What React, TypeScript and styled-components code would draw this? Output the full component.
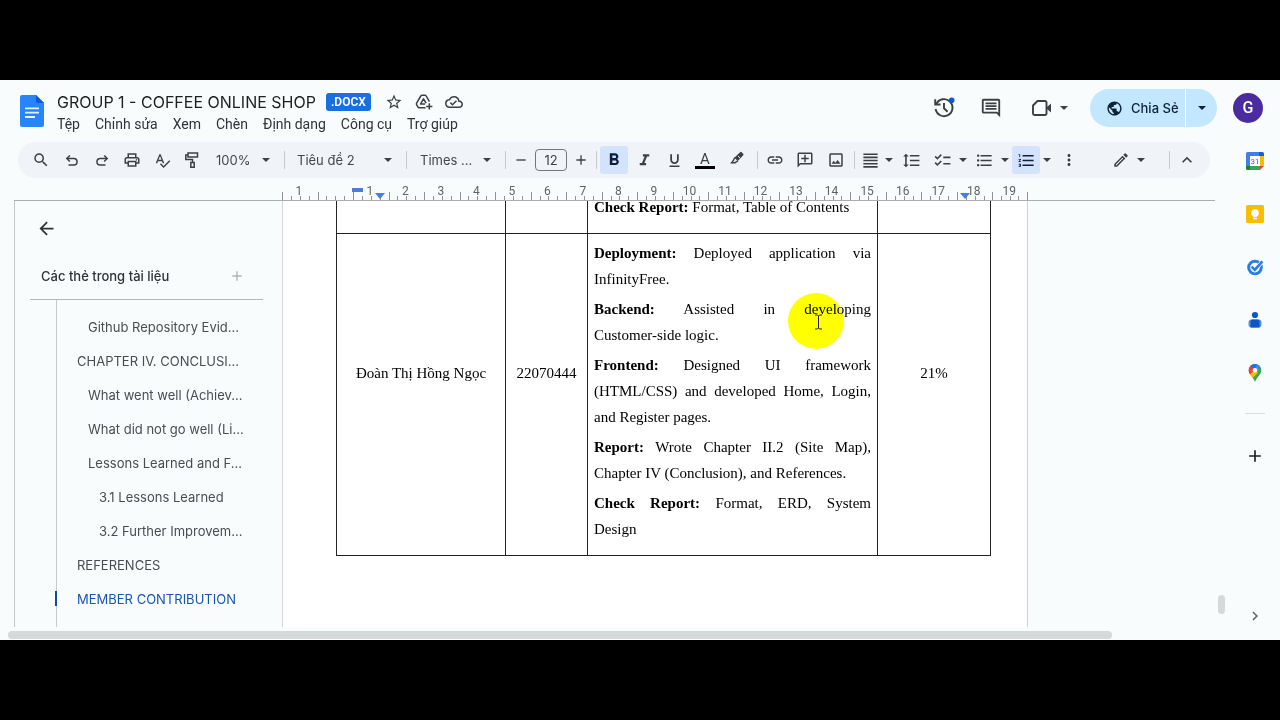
import React from "react";
import styled, { createGlobalStyle, css } from "styled-components";
import {
  MdSearch,
  MdOutlinePrint,
  MdSpellcheck,
  MdFormatBold,
  MdFormatItalic,
  MdFormatUnderlined,
  MdInsertLink,
  MdOutlineAddComment,
  MdOutlineImage,
  MdFormatAlignJustify,
  MdFormatLineSpacing,
  MdChecklist,
  MdFormatListBulleted,
  MdFormatListNumbered,
  MdMoreVert,
  MdOutlineModeEdit,
  MdKeyboardArrowUp,
  MdKeyboardArrowRight,
  MdStarOutline,
  MdOutlineCloudDone,
  MdOutlineComment,
  MdPublic,
  MdArrowBack,
  MdAdd,
  MdRemove,
} from "react-icons/md";

const ui = `"Inter", "Roboto", sans-serif`;
const menu = `"Roboto", sans-serif`;
const serif = `"Liberation Serif", "Times New Roman", serif`;

const GlobalStyle = createGlobalStyle`
  * { box-sizing: border-box; }
  body { margin: 0; background: #000; }
  button, input, select { font: inherit; color: inherit; }
  svg { display: block; flex: none; }
`;

const Screen = styled.div`
  display: flex;
  flex-direction: column;
  height: 100vh;
  padding: 80px 0;
  background: #000;
  overflow: hidden;
`;

const Editor = styled.div`
  flex: 1;
  min-height: 0;
  display: flex;
  flex-direction: column;
  background: #f8fcfd;
  color: #3c4043;
  font-family: ${menu};
  font-size: 14px;
`;

const Header = styled.header`
  flex: none;
  display: flex;
  align-items: center;
  height: 54px;
  padding: 2px 17px 0 20px;
`;

const LogoLink = styled.a`
  margin-top: 6px;
`;

const TitleBlock = styled.div`
  flex: 1;
  align-self: flex-start;
  margin: 9px 0 0 13px;
`;

const TitleRow = styled.div`
  display: flex;
  align-items: center;
  height: 22px;
`;

const DocTitle = styled.h1`
  margin: 0;
  color: #1f1f1f;
  font-family: ${ui};
  font-size: 16px;
  font-weight: 400;
  line-height: 22px;
  white-space: nowrap;
`;

const FileBadge = styled.span`
  margin: 0 9px 0 10px;
  padding: 0 5px;
  border-radius: 3px;
  background: #1a6fe0;
  color: #fff;
  font-family: ${menu};
  font-size: 12px;
  font-weight: 600;
  line-height: 18px;
`;

const PlainButton = styled.button<{ $w?: number }>`
  display: flex;
  align-items: center;
  justify-content: center;
  flex: none;
  width: ${(p) => p.$w ?? 28}px;
  height: 28px;
  padding: 0;
  border: 0;
  background: none;
  color: #3c4043;
`;

const MeetButton = styled(PlainButton)`
  justify-content: space-between;
  width: 37px;
  margin-left: 7px;
`;

const MenuBar = styled.nav`
  display: flex;
  gap: 15px;
`;

const MenuButton = styled.button`
  padding: 0;
  border: 0;
  background: none;
  color: #303236;
  font-size: 14px;
  line-height: 22px;
  white-space: nowrap;
`;

const HeaderActions = styled.div`
  display: flex;
  align-items: center;
  gap: 19px;
`;

const ShareGroup = styled.div`
  display: flex;
  height: 38px;
  margin-left: 3px;
  border-radius: 19px;
  overflow: hidden;
  background: #c2e7ff;
`;

const ShareButton = styled.button`
  display: flex;
  align-items: center;
  gap: 8px;
  width: 96px;
  padding: 0 0 0 16px;
  border: 0;
  border-right: 1px solid #f8fcfd;
  background: none;
  color: #0b2238;
  font-family: ${ui};
  font-size: 13px;
  font-weight: 500;
  white-space: nowrap;
`;

const ShareMenu = styled.button`
  display: flex;
  align-items: center;
  justify-content: center;
  width: 31px;
  padding: 0;
  border: 0;
  background: none;
  color: #0b2238;
`;

const Avatar = styled.button`
  width: 30px;
  height: 30px;
  margin-left: -3px;
  padding: 0;
  border: 0;
  border-radius: 50%;
  background: #4a2ba0;
  color: #fff;
  font-size: 16px;
  font-weight: 500;
  line-height: 30px;
`;

const Body = styled.div`
  flex: 1;
  min-height: 0;
  display: flex;
`;

const Main = styled.main`
  flex: 1;
  min-width: 0;
  display: flex;
  flex-direction: column;
`;

const Toolbar = styled.div`
  flex: none;
  display: flex;
  align-items: center;
  height: 36px;
  margin: 8px 20px 0 18px;
  padding: 0 8px 0 6px;
  border-radius: 18px;
  background: #f0f4f9;
`;

const Tool = styled.button<{ $w?: number; $active?: boolean }>`
  display: flex;
  align-items: center;
  justify-content: center;
  flex: none;
  width: ${(p) => p.$w ?? 28}px;
  height: 28px;
  margin: 0 1px;
  padding: 0;
  border: 0;
  border-radius: 3px;
  background: ${(p) => (p.$active ? "#d3e3fd" : "none")};
  color: ${(p) => (p.$active ? "#0b1f3f" : "#3c4043")};
`;

const CaretTool = styled(Tool)`
  width: 12px;
  margin: 0;
`;

const ModeTool = styled(Tool)`
  justify-content: flex-start;
  gap: 7px;
  width: 68px;
  padding-left: 14px;
`;

const Divider = styled.span`
  flex: none;
  width: 1px;
  height: 18px;
  margin: 0 2px;
  background: #c7cacd;
`;

const Spacer = styled.span`
  flex: 1;
`;

const PickerBox = styled.label<{ $w: number }>`
  flex: none;
  display: grid;
  grid-template-columns: 1fr;
  align-items: center;
  width: ${(p) => p.$w}px;
  & > * { grid-area: 1 / 1; }
  & > svg { justify-self: end; margin-right: 12px; pointer-events: none; }
`;

const Picker = styled.select<{ $pad: number }>`
  appearance: none;
  width: 100%;
  height: 28px;
  padding: 0 0 0 ${(p) => p.$pad}px;
  border: 0;
  background: none;
  color: #444746;
  font-family: ${ui};
  font-size: 13px;
`;

const SizeInput = styled.input`
  flex: none;
  width: 32px;
  height: 22px;
  margin: 0 1px;
  padding: 0;
  border: 1px solid #747775;
  border-radius: 4px;
  background: none;
  font-family: ${ui};
  font-size: 13px;
  text-align: center;
`;

const LetterA = styled.span`
  display: flex;
  flex-direction: column;
  align-items: center;
  font-size: 15px;
  line-height: 14px;
  &::after {
    content: "";
    width: 20px;
    height: 3px;
    background: #000;
  }
`;

const Ruler = styled.div`
  flex: none;
  display: flex;
  height: 23px;
  margin: 0 15px 0 14px;
  padding-left: 268px;
  border-bottom: 1px solid #a9adb0;
`;

const Scale = styled.div`
  position: relative;
  flex: none;
  display: grid;
  grid-template-columns: repeat(21, 1fr);
  width: 746px;
`;

const Centimetre = styled.div`
  display: flex;
  flex-direction: column;
  justify-content: flex-end;
  color: #5f6368;
  font-family: ${menu};
  font-size: 12px;
  line-height: 12px;
  text-align: center;
`;

const CmLabel = styled.span`
  height: 12px;
  margin-bottom: -5px;
  padding-right: 2px;
`;

const Ticks = styled.span`
  display: grid;
  grid-template-columns: repeat(4, 1fr);
  align-items: end;
  height: 8px;
  & > i { height: 4px; border-left: 1px solid #8f9396; }
  & > i:first-child { height: 8px; }
  ${Centimetre}:nth-child(21) & { border-right: 1px solid #8f9396; }
`;

const FirstLineMark = styled.span`
  position: absolute;
  left: 70px;
  top: 10px;
  width: 11px;
  height: 4px;
  background: #4a7fd8;
`;

const IndentMark = styled.span<{ $x: number }>`
  position: absolute;
  left: ${(p) => p.$x}px;
  bottom: 1px;
  border: 5px solid transparent;
  border-top: 6px solid #4a7fd8;
  border-bottom: 0;
`;

const Workspace = styled.div`
  flex: 1;
  min-height: 0;
  display: flex;
  margin-left: 14px;
  overflow: hidden;
`;

const Outline = styled.aside`
  flex: none;
  width: 269px;
  padding: 0 19px 0 15px;
  border-left: 1px solid #c4c7c9;
  border-right: 1px solid #d5d8da;
  font-family: ${ui};
`;

const BackButton = styled(PlainButton)`
  margin: 13px 0 0 2px;
  color: #303236;
`;

const TabsHeader = styled.div`
  display: flex;
  align-items: center;
  justify-content: space-between;
  height: 48px;
  margin-top: 10px;
  padding: 0 12px 0 11px;
  border-bottom: 1px solid #b4b8ba;
`;

const TabsTitle = styled.h2`
  margin: 0;
  color: #303236;
  font-size: 13px;
  font-weight: 500;
  white-space: nowrap;
`;

const TabsAdd = styled(PlainButton)`
  color: #b0b3b5;
`;

const Tree = styled.ul`
  margin: 0 0 0 26px;
  padding: 10px 0 30px;
  border-left: 1px solid #c9cccf;
  list-style: none;
`;

const TreeItem = styled.li<{ $level: number; $active?: boolean }>`
  position: relative;
  height: 34px;
  padding-left: ${(p) => 9 + p.$level * 11}px;
  line-height: 34px;
  white-space: nowrap;
  ${(p) =>
    p.$active &&
    css`
      &::before {
        content: "";
        position: absolute;
        left: -2px;
        top: 9px;
        width: 2px;
        height: 15px;
        background: #0b4aa8;
      }
    `}
`;

const TreeLink = styled.a<{ $active?: boolean }>`
  color: ${(p) => (p.$active ? "#1a55b0" : "#4a4d50")};
  font-size: 13px;
  text-decoration: none;
`;

const Paper = styled.article`
  position: relative;
  flex: none;
  width: 745px;
  background: #fff;
  border-right: 1px solid #d0d3d5;
  font-family: ${serif};
  font-size: 15px;
  line-height: 26px;
  color: #000;
`;

const ContributionTable = styled.table`
  width: 654px;
  margin: -14px 0 0 53px;
  border-collapse: collapse;
  table-layout: fixed;
`;

const Column = styled.col<{ $w: number }>`
  width: ${(p) => p.$w}px;
`;

const Cell = styled.td`
  padding: 6px 6px 13px 6px;
  border: 1px solid #222;
  text-align: justify;
  vertical-align: top;
`;

const CentredCell = styled(Cell)`
  padding: 0 0 44px;
  text-align: center;
  vertical-align: middle;
`;

const Para = styled.p`
  margin: 0 0 4px;
  &:last-child { margin-bottom: 0; }
`;

const Unbroken = styled.span`
  white-space: nowrap;
`;

const Spotlight = styled.span`
  position: absolute;
  left: 505px;
  top: 92px;
  width: 56px;
  height: 56px;
  border-radius: 50%;
  background: #ffff00;
  mix-blend-mode: multiply;
`;

const TextCursor = styled.svg`
  position: absolute;
  left: 531px;
  top: 113px;
`;

const ScrollColumn = styled.div`
  flex: none;
  display: flex;
  align-items: flex-end;
  width: 12px;
  padding-bottom: 13px;
`;

const VThumb = styled.span`
  width: 7px;
  height: 19px;
  border-radius: 4px;
  background: #d6d9da;
`;

const Desk = styled.div`
  flex: 1;
`;

const HThumb = styled.div`
  flex: none;
  height: 8px;
  margin: 4px 118px 1px 8px;
  border-radius: 4px;
  background: #d6d9da;
`;

const Rail = styled.aside`
  flex: none;
  display: flex;
  flex-direction: column;
  align-items: center;
  width: 50px;
  padding-bottom: 10px;
`;

const RailButton = styled.button`
  display: flex;
  align-items: center;
  justify-content: center;
  flex: none;
  width: 50px;
  height: 53px;
  padding: 0;
  border: 0;
  background: none;
  color: #1f1f1f;
`;

const RailRule = styled.hr`
  width: 20px;
  height: 1px;
  margin: 14px 0 15px;
  border: 0;
  background: #dadcde;
`;

const RailToggle = styled(RailButton)`
  height: 28px;
  margin-top: auto;
  color: #5f6368;
`;

const Caret = () => (
  <svg width="8" height="4" viewBox="0 0 8 4" fill="currentColor" aria-hidden="true">
    <path d="M0 0h8L4 4z" />
  </svg>
);

const DocsLogo = () => (
  <svg width="24" height="32" viewBox="0 0 24 32" aria-hidden="true">
    <path d="M2 0H16l8 8v22a2 2 0 0 1-2 2H2a2 2 0 0 1-2-2V2a2 2 0 0 1 2-2z" fill="#2684fc" />
    <path d="M16 0l8 8h-6a2 2 0 0 1-2-2z" fill="#0b5bd3" />
    <path d="M5 12.500h14v1.800H5zM5 16.800h14v1.800H5zM5 21.100h10v1.800H5z" fill="#e8f1ff" />
  </svg>
);

const DriveAddIcon = () => (
  <svg width="18" height="16" viewBox="0 0 18 16" fill="none" stroke="currentColor" strokeWidth="1.500" aria-hidden="true">
    <path d="M10.500 13.700H4.200a1.500 1.500 0 0 1-1.300-.7L1.600 10.600a1.500 1.500 0 0 1 0-1.400L5.800 2a1.500 1.500 0 0 1 1.300-.8h2.800a1.500 1.500 0 0 1 1.300.8l3.200 5.600" strokeLinejoin="round" />
    <path d="M10.200 10H5.500l3-5.200 2.600 4.400" strokeLinejoin="round" />
    <path d="M14.300 9.300v6.200M11.200 12.400h6.200" />
  </svg>
);

const HistoryIcon = () => (
  <svg width="24" height="24" viewBox="0 0 24 24" fill="none" stroke="currentColor" strokeWidth="1.900" aria-hidden="true">
    <path d="M4.300 8a8.500 8.500 0 1 1-.7 5" />
    <path d="M3.200 3.200v5.300h5.300" />
    <path d="M12 7v5.300l3.600 3.400" />
    <circle cx="19.700" cy="4.300" r="2.800" fill="#0b57d0" stroke="none" />
  </svg>
);

const VideoIcon = () => (
  <svg width="22" height="20" viewBox="0 0 22 20" fill="none" stroke="currentColor" strokeWidth="1.900" aria-hidden="true">
    <path d="M6.500 3H14a1.500 1.500 0 0 1 1.500 1.500v11A1.500 1.500 0 0 1 14 17H3.500A1.500 1.500 0 0 1 2 15.500V7.500z" strokeLinejoin="round" />
    <path d="M16 9l4-3.500v9L16 11z" fill="currentColor" stroke="none" />
  </svg>
);

const UndoIcon = ({ flip }: { flip?: boolean }) => (
  <svg
    width="16"
    height="16"
    viewBox="0 0 16 16"
    fill="none"
    stroke="currentColor"
    strokeWidth="1.500"
    transform={flip ? "scale(-1 1)" : undefined}
    aria-hidden="true"
  >
    <path d="M5.800 3.500L2.800 6.500l3 3" />
    <path d="M3 6.500h6.800a3.200 3.200 0 0 1 0 6.500H4.500" />
  </svg>
);

const RollerIcon = () => (
  <svg width="16" height="18" viewBox="0 0 16 18" fill="none" stroke="currentColor" strokeWidth="1.500" aria-hidden="true">
    <path d="M4 2h9.500v4H4zM4 4H1.800v4.500h6.700v3" />
    <path d="M6.800 11.500h3.400v4.700H6.800z" />
  </svg>
);

const HighlighterIcon = () => (
  <svg width="16" height="18" viewBox="0 0 16 18" aria-hidden="true">
    <path d="M7.500 3.800l2.600-2.600a1.200 1.200 0 0 1 1.600 0l1.500 1.500a1.200 1.200 0 0 1 0 1.600l-2.500 2.700-3 3-3.300-3.300z" fill="currentColor" />
    <path d="M4.700 6.500L3.600 9.200l-2 2.500h3.600l.9-.9 2-.9" fill="none" stroke="currentColor" strokeWidth="1.400" />
    <path d="M8 5l2.200 2.200" stroke="#f0f4f9" strokeWidth="1" />
  </svg>
);

const CalendarIcon = () => (
  <svg width="18" height="18" viewBox="0 0 18 18" aria-hidden="true">
    <path d="M1.500 0H13v4H4v10H0V1.500A1.500 1.500 0 0 1 1.500 0z" fill="#3f7fe8" />
    <path d="M13 0h3.500A1.500 1.500 0 0 1 18 1.500V4h-5z" fill="#1a5fd0" />
    <path d="M14 4h4v10h-4z" fill="#fbbc04" />
    <path d="M4 14h10v4H4z" fill="#34a853" />
    <path d="M0 14h4v4H1.500A1.500 1.500 0 0 1 0 16.500z" fill="#188038" />
    <path d="M14 14h4l-4 4z" fill="#ea4335" />
    <path d="M4 4h10v10H4z" fill="#fff" />
    <text x="9" y="12" textAnchor="middle" fontFamily="Roboto, sans-serif" fontSize="8" fill="#1a73e8">31</text>
  </svg>
);

const KeepIcon = () => (
  <svg width="18" height="18" viewBox="0 0 18 18" aria-hidden="true">
    <rect width="18" height="18" rx="1.500" fill="#fbbc04" />
    <circle cx="9" cy="8" r="3.800" fill="#fff" />
    <path d="M7.200 11h3.600v1.200H7.200zM7.200 13h3.600v1.300H7.200z" fill="#fff" />
  </svg>
);

const TasksIcon = () => (
  <svg width="18" height="18" viewBox="0 0 18 18" fill="none" aria-hidden="true">
    <circle cx="9" cy="9.500" r="6.300" stroke="#2a7de8" strokeWidth="3" />
    <path d="M5.800 8.800l3 3 7.200-8" stroke="#f8fcfd" strokeWidth="4" />
    <path d="M5.600 8.600l3.200 3.200 7.600-8.500" stroke="#2a7de8" strokeWidth="2.600" />
  </svg>
);

const ContactsIcon = () => (
  <svg width="16" height="18" viewBox="0 0 16 18" aria-hidden="true">
    <circle cx="8" cy="4" r="3.100" fill="#0b57c8" />
    <rect x="1.500" y="8.500" width="13" height="8" rx="3" fill="#5a8df0" />
    <path d="M3.500 10.500a2 2 0 0 1 2-2h5a2 2 0 0 1 2 2v6h-9z" fill="#0b57c8" />
  </svg>
);

const MapsIcon = () => (
  <svg width="14" height="18" viewBox="0 0 14 18" aria-hidden="true">
    <defs>
      <clipPath id="pin">
        <path d="M7 0a6.300 6.300 0 0 1 6.300 6.300C13.300 11 9 12.500 7 18 5 12.500.700 11 .700 6.300A6.300 6.300 0 0 1 7 0z" />
      </clipPath>
    </defs>
    <g clipPath="url(#pin)">
      <rect width="14" height="18" fill="#34a853" />
      <path d="M0 0h14v3L7 6.500z" fill="#4285f4" />
      <path d="M0 0l4 2 3 4.500-6 4.500H0z" fill="#ea4335" />
      <path d="M0 12L7 6.300l3 2.500-6 6z" fill="#fbbc04" />
      <path d="M3 0h6L7 5 3 3z" fill="#1a73e8" />
    </g>
    <circle cx="7" cy="6.300" r="2.300" fill="#fff" />
  </svg>
);

const MENUS = ["Tệp", "Chỉnh sửa", "Xem", "Chèn", "Định dạng", "Công cụ", "Trợ giúp"];

const OUTLINE = [
  { text: "Github Repository Evid...", level: 2 },
  { text: "CHAPTER IV. CONCLUSI...", level: 1 },
  { text: "What went well (Achiev...", level: 2 },
  { text: "What did not go well (Li...", level: 2 },
  { text: "Lessons Learned and F...", level: 2 },
  { text: "3.1 Lessons Learned", level: 3 },
  { text: "3.2 Further Improvem...", level: 3 },
  { text: "REFERENCES", level: 1 },
  { text: "MEMBER CONTRIBUTION", level: 1, active: true },
];

const TASKS: { name: string; text: React.ReactNode }[] = [
  { name: "Deployment:", text: "Deployed application via InfinityFree." },
  { name: "Backend:", text: <>Assisted in developing <Unbroken>Customer-side</Unbroken> logic.</> },
  { name: "Frontend:", text: "Designed UI framework (HTML/CSS) and developed Home, Login, and Register pages." },
  { name: "Report:", text: "Wrote Chapter II.2 (Site Map), Chapter IV (Conclusion), and References." },
  { name: "Check Report:", text: "Format, ERD, System Design" },
];

const CM_LABELS = ["1", "", ...Array.from({ length: 19 }, (_, i) => String(i + 1))];

const App: React.FC = () => (
  <>
    <GlobalStyle />
    <Screen>
      <Editor>
        <Header>
          <LogoLink href="#" aria-label="Trang chủ Tài liệu"><DocsLogo /></LogoLink>
          <TitleBlock>
            <TitleRow>
              <DocTitle>GROUP 1 - COFFEE ONLINE SHOP</DocTitle>
              <FileBadge>.DOCX</FileBadge>
              <PlainButton aria-label="Gắn dấu sao"><MdStarOutline size={18} /></PlainButton>
              <PlainButton $w={32} aria-label="Thêm vào Drive"><DriveAddIcon /></PlainButton>
              <PlainButton aria-label="Trạng thái tài liệu"><MdOutlineCloudDone size={18} /></PlainButton>
            </TitleRow>
            <MenuBar>
              {MENUS.map((m) => <MenuButton key={m}>{m}</MenuButton>)}
            </MenuBar>
          </TitleBlock>
          <HeaderActions>
            <PlainButton aria-label="Nhật ký phiên bản"><HistoryIcon /></PlainButton>
            <PlainButton aria-label="Nhận xét"><MdOutlineComment size={22} /></PlainButton>
            <MeetButton aria-label="Cuộc gọi"><VideoIcon /><Caret /></MeetButton>
            <ShareGroup>
              <ShareButton><MdPublic size={17} />Chia Sẻ</ShareButton>
              <ShareMenu aria-label="Tùy chọn chia sẻ"><Caret /></ShareMenu>
            </ShareGroup>
            <Avatar>G</Avatar>
          </HeaderActions>
        </Header>
        <Body>
          <Main>
            <Toolbar role="toolbar">
              <Tool $w={31} aria-label="Tìm kiếm"><MdSearch size={18} /></Tool>
              <Tool aria-label="Hoàn tác"><UndoIcon /></Tool>
              <Tool aria-label="Làm lại"><UndoIcon flip /></Tool>
              <Tool aria-label="In"><MdOutlinePrint size={18} /></Tool>
              <Tool aria-label="Kiểm tra chính tả"><MdSpellcheck size={17} /></Tool>
              <Tool aria-label="Sao chép định dạng"><RollerIcon /></Tool>
              <PickerBox $w={75}>
                <Picker $pad={9} aria-label="Thu phóng"><option>100%</option></Picker>
                <Caret />
              </PickerBox>
              <Divider />
              <PickerBox $w={117}>
                <Picker $pad={10} aria-label="Kiểu"><option>Tiêu đề 2</option></Picker>
                <Caret />
              </PickerBox>
              <Divider />
              <PickerBox $w={94}>
                <Picker $pad={11} aria-label="Phông chữ"><option>Times ...</option></Picker>
                <Caret />
              </PickerBox>
              <Divider />
              <Tool $w={24} aria-label="Giảm cỡ chữ"><MdRemove size={16} /></Tool>
              <SizeInput defaultValue="12" aria-label="Cỡ chữ" />
              <Tool $w={24} aria-label="Tăng cỡ chữ"><MdAdd size={16} /></Tool>
              <Divider />
              <Tool $active aria-label="Đậm"><MdFormatBold size={20} /></Tool>
              <Tool aria-label="Nghiêng"><MdFormatItalic size={19} /></Tool>
              <Tool aria-label="Gạch chân"><MdFormatUnderlined size={17} /></Tool>
              <Tool $w={30} aria-label="Màu chữ"><LetterA>A</LetterA></Tool>
              <Tool $w={32} aria-label="Màu đánh dấu"><HighlighterIcon /></Tool>
              <Divider />
              <Tool aria-label="Chèn liên kết"><MdInsertLink size={18} /></Tool>
              <Tool aria-label="Thêm nhận xét"><MdOutlineAddComment size={18} transform="scale(-1 1)" /></Tool>
              <Tool $w={30} aria-label="Chèn hình ảnh"><MdOutlineImage size={18} /></Tool>
              <Divider />
              <Tool $w={24} aria-label="Căn đều"><MdFormatAlignJustify size={19} /></Tool>
              <CaretTool aria-label="Tùy chọn căn chỉnh"><Caret /></CaretTool>
              <Tool $w={30} aria-label="Giãn dòng"><MdFormatLineSpacing size={19} /></Tool>
              <Tool aria-label="Danh sách kiểm tra"><MdChecklist size={19} /></Tool>
              <CaretTool aria-label="Tùy chọn danh sách kiểm tra"><Caret /></CaretTool>
              <Tool aria-label="Danh sách dấu đầu dòng"><MdFormatListBulleted size={19} /></Tool>
              <CaretTool aria-label="Tùy chọn dấu đầu dòng"><Caret /></CaretTool>
              <Tool $active aria-label="Danh sách đánh số"><MdFormatListNumbered size={19} /></Tool>
              <CaretTool aria-label="Tùy chọn đánh số"><Caret /></CaretTool>
              <Tool $w={30} aria-label="Khác"><MdMoreVert size={18} /></Tool>
              <Spacer />
              <ModeTool aria-label="Chế độ chỉnh sửa"><MdOutlineModeEdit size={18} /><Caret /></ModeTool>
              <Divider />
              <Tool aria-label="Ẩn menu"><MdKeyboardArrowUp size={20} /></Tool>
            </Toolbar>
            <Ruler>
              <Scale>
                {CM_LABELS.map((label, i) => (
                  <Centimetre key={i}>
                    <CmLabel>{label}</CmLabel>
                    <Ticks><i /><i /><i /><i /></Ticks>
                  </Centimetre>
                ))}
                <FirstLineMark />
                <IndentMark $x={93} />
                <IndentMark $x={678} />
              </Scale>
            </Ruler>
            <Workspace>
              <Outline>
                <BackButton aria-label="Đóng"><MdArrowBack size={21} /></BackButton>
                <TabsHeader>
                  <TabsTitle>Các thẻ trong tài liệu</TabsTitle>
                  <TabsAdd aria-label="Thêm thẻ"><MdAdd size={16} /></TabsAdd>
                </TabsHeader>
                <Tree>
                  {OUTLINE.map((o) => (
                    <TreeItem key={o.text} $level={o.level} $active={o.active}>
                      <TreeLink href="#" $active={o.active}>{o.text}</TreeLink>
                    </TreeItem>
                  ))}
                </Tree>
              </Outline>
              <Paper>
                <ContributionTable>
                  <colgroup>
                    <Column $w={169} />
                    <Column $w={82} />
                    <Column $w={290} />
                    <Column $w={113} />
                  </colgroup>
                  <tbody>
                    <tr>
                      <Cell />
                      <Cell />
                      <Cell>
                        <Para><b>Check Report:</b> Format, Table of Contents</Para>
                      </Cell>
                      <Cell />
                    </tr>
                    <tr>
                      <CentredCell>Đoàn Thị Hồng Ngọc</CentredCell>
                      <CentredCell>22070444</CentredCell>
                      <Cell>
                        {TASKS.map((t) => (
                          <Para key={t.name}><b>{t.name}</b> {t.text}</Para>
                        ))}
                      </Cell>
                      <CentredCell>21%</CentredCell>
                    </tr>
                  </tbody>
                </ContributionTable>
                <Spotlight />
                <TextCursor width="9" height="16" viewBox="0 0 9 16" fill="none" stroke="#222" aria-hidden="true">
                  <path d="M1 1h2.500l1 1 1-1H8M4.500 2v12M1 15h2.500l1-1 1 1H8" />
                </TextCursor>
              </Paper>
              <Desk />
              <ScrollColumn><VThumb /></ScrollColumn>
            </Workspace>
            <HThumb />
          </Main>
          <Rail>
            <RailButton aria-label="Lịch"><CalendarIcon /></RailButton>
            <RailButton aria-label="Keep"><KeepIcon /></RailButton>
            <RailButton aria-label="Tasks"><TasksIcon /></RailButton>
            <RailButton aria-label="Danh bạ"><ContactsIcon /></RailButton>
            <RailButton aria-label="Maps"><MapsIcon /></RailButton>
            <RailRule />
            <RailButton aria-label="Tải tiện ích bổ sung"><MdAdd size={20} /></RailButton>
            <RailToggle aria-label="Ẩn bảng điều khiển bên"><MdKeyboardArrowRight size={18} /></RailToggle>
          </Rail>
        </Body>
      </Editor>
    </Screen>
  </>
);

export default App;
